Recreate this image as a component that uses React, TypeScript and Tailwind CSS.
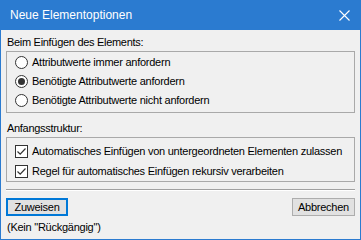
import React from "react";

const font = { fontFamily: "'Liberation Sans', Arial, sans-serif" };

const Radio: React.FC<{ checked?: boolean; label: string }> = ({ checked, label }) => (
  <div className="flex items-center h-[19px]">
    <span className="w-[13px] h-[13px] rounded-full border border-[#333333] bg-white flex items-center justify-center shrink-0">
      {checked && <span className="w-[7px] h-[7px] rounded-full bg-[#333333]" />}
    </span>
    <span className="ml-[4px] text-[11px] text-black whitespace-nowrap tracking-[-0.25px]">{label}</span>
  </div>
);

const Check: React.FC<{ label: string }> = ({ label }) => (
  <div className="flex items-center h-[20px]">
    <span className="w-[13px] h-[13px] border border-[#333333] bg-white flex items-center justify-center shrink-0">
      <svg width="11" height="11" viewBox="0 0 11 11">
        <path d="M1.5 5.5 L4.2 8.2 L9.5 2.5" fill="none" stroke="#333333" strokeWidth="1.2" />
      </svg>
    </span>
    <span className="ml-[4px] text-[11px] text-black whitespace-nowrap tracking-[-0.25px]">{label}</span>
  </div>
);

export default function App() {
  return (
    <div className="w-[361px] h-[240px] flex flex-col border border-t-0 border-[#2b7bd0] bg-[#f0f0f0] overflow-hidden" style={font}>
      {/* title bar */}
      <div className="h-[30px] bg-[#2b7bd0] flex items-center justify-between pl-[9px] pr-[10px] shrink-0">
        <span className="text-white text-[12px]">Neue Elementoptionen</span>
        <svg width="11" height="11" viewBox="0 0 11 11">
          <path d="M0.5 0.5 L10.5 10.5 M10.5 0.5 L0.5 10.5" stroke="white" strokeWidth="1.1" />
        </svg>
      </div>

      <div className="flex flex-col px-[5px] pt-[5px]">
        <div className="text-[11px] text-black h-[14px] leading-[14px] pl-[1px] tracking-[-0.3px]">Beim Einfügen des Elements:</div>
        <div className="mt-[2px] border border-[#a9a9a9] h-[62px] pl-[8px] pt-[1px]">
          <Radio label="Attributwerte immer anfordern" />
          <Radio checked label="Benötigte Attributwerte anfordern" />
          <Radio label="Benötigte Attributwerte nicht anfordern" />
        </div>

        <div className="mt-[8px] text-[11px] text-black h-[14px] leading-[14px] pl-[1px] tracking-[-0.3px]">Anfangsstruktur:</div>
        <div className="mt-[2px] border border-[#a9a9a9] h-[45px] pl-[8px] pt-[3px]">
          <Check label="Automatisches Einfügen von untergeordneten Elementen zulassen" />
          <Check label="Regel für automatisches Einfügen rekursiv verarbeiten" />
        </div>

        <div className="mt-[7px] border-t border-[#a0a0a0] border-b border-b-white" />

        <div className="mt-[7px] flex justify-between">
          <button className="w-[62px] h-[18px] border-2 border-[#0078d7] bg-[#e1e1e1] text-[11px] text-black flex items-center justify-center leading-none tracking-[-0.25px]">
            Zuweisen
          </button>
          <button className="w-[63px] h-[18px] border border-[#adadad] bg-[#e1e1e1] text-[11px] text-black flex items-center justify-center leading-none tracking-[-0.25px]">
            Abbrechen
          </button>
        </div>
        <div className="mt-[3px] text-[11px] text-black pl-[1px] tracking-[-0.25px]">(Kein "Rückgängig")</div>
      </div>
    </div>
  );
}
